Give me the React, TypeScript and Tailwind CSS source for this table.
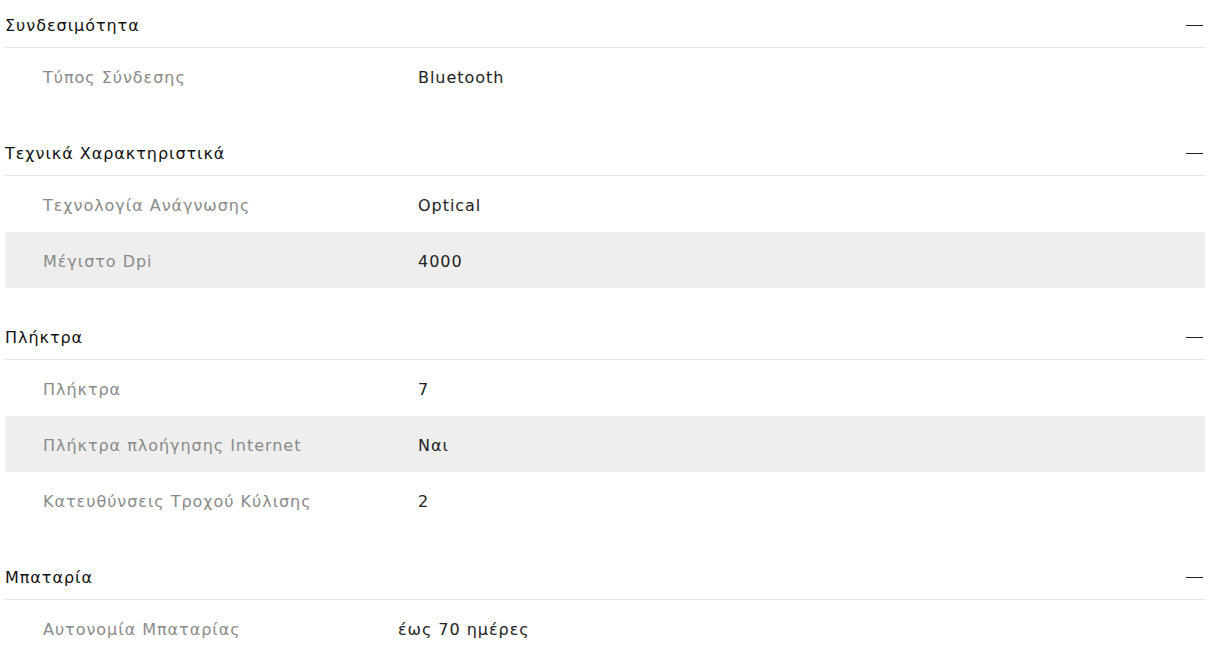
import React from 'react';

type Spec = { label: string; value: string };
type Group = { title: string; rows: Spec[]; labelWidth: string };

const groups: Group[] = [
  {
    title: 'Συνδεσιμότητα',
    labelWidth: 'w-[375px]',
    rows: [{ label: 'Τύπος Σύνδεσης', value: 'Bluetooth' }],
  },
  {
    title: 'Τεχνικά Χαρακτηριστικά',
    labelWidth: 'w-[375px]',
    rows: [
      { label: 'Τεχνολογία Ανάγνωσης', value: 'Optical' },
      { label: 'Μέγιστο Dpi', value: '4000' },
    ],
  },
  {
    title: 'Πλήκτρα',
    labelWidth: 'w-[375px]',
    rows: [
      { label: 'Πλήκτρα', value: '7' },
      { label: 'Πλήκτρα πλοήγησης Internet', value: 'Ναι' },
      { label: 'Κατευθύνσεις Τροχού Κύλισης', value: '2' },
    ],
  },
  {
    title: 'Μπαταρία',
    labelWidth: 'w-[355px]',
    rows: [{ label: 'Αυτονομία Μπαταρίας', value: 'έως 70 ημέρες' }],
  },
];

function SpecGroup({ group }: { group: Group }) {
  return (
    <section className="mb-6">
      {/* Group header */}
      <div className="flex h-12 items-center justify-between border-b border-[#e6e6e6] pt-1">
        <h3 className="text-[#111]">{group.title}</h3>
        <span className="mr-[2px] block h-[1.5px] w-[17px] bg-[#222]" />
      </div>

      {/* Rows, every second one shaded */}
      {group.rows.map((row, i) => (
        <div
          key={row.label}
          className={`flex h-14 items-center pl-[38px] pt-1 ${i % 2 === 1 ? 'bg-[#eeeeee]' : ''}`}
        >
          <span className={`${group.labelWidth} shrink-0 text-[#8a8a8a]`}>{row.label}</span>
          <span className="text-[#222]">{row.value}</span>
        </div>
      ))}
    </section>
  );
}

export default function App() {
  return (
    <div className="min-h-screen bg-white px-[5px] pr-[11px] text-[16px] tracking-[0.06em] font-['DejaVu_Sans',sans-serif]">
      {groups.map((g) => (
        <SpecGroup key={g.title} group={g} />
      ))}
    </div>
  );
}
